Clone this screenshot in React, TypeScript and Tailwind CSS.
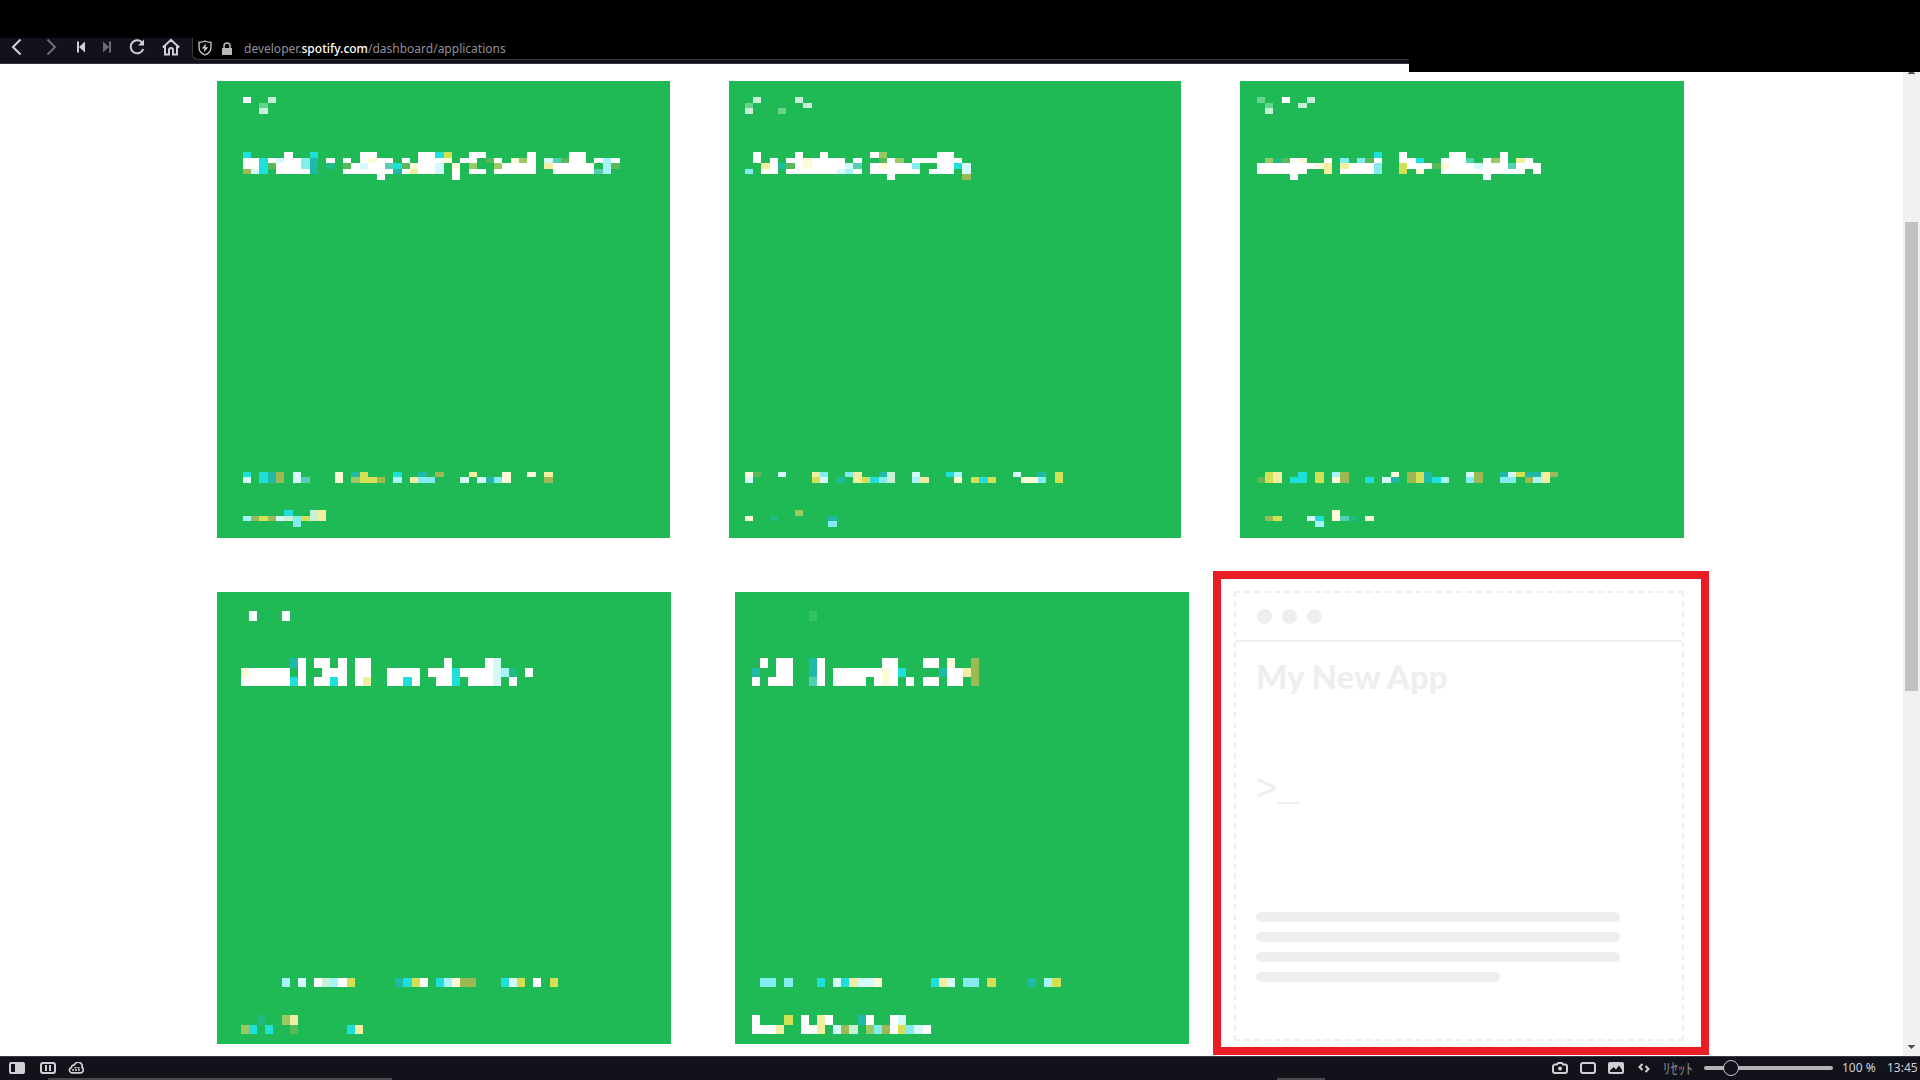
import React from "react";

const PALETTE: Record<string, string> = {
  w: "#ffffff",
  i: "#fbfbda",
  b: "#f1eea2",
  y: "#d3e053",
  o: "#9db954",
  l: "#98cc62",
  g: "#57b957",
  m: "#c6f1d6",
  s: "#68d38d",
  f: "#34c367",
  n: "#55cfb4",
  e: "#1fbc80",
  t: "#1fb9a6",
  c: "#1fdfda",
  k: "#82ecee",
  q: "#a5f4fa",
  p: "#d3f9f8",
};

type Band = { ys: number[]; rows: string[] };

type MosaicProps = {
  inset: number;
  pitch: number;
  height: number;
  bands: Band[];
  snap: (value: number) => number;
};

function Mosaic({ inset, pitch, height, bands, snap }: MosaicProps) {
  return (
    <svg width="440" height={height} shapeRendering="crispEdges" className="block shrink-0" aria-hidden="true">
      {bands.map((band, b) =>
        band.rows.map((row, r) =>
          row.split("").map((ch, c) => {
            if (!PALETTE[ch]) return null;
            const x = inset + snap(c * pitch);
            const next = inset + snap((c + 1) * pitch);
            return (
              <rect
                key={`${b}-${r}-${c}`}
                x={x}
                y={band.ys[r]}
                width={next - x}
                height={band.ys[r + 1] - band.ys[r]}
                fill={PALETTE[ch]}
              />
            );
          })
        )
      )}
    </svg>
  );
}

type CardData = { inset: number; badge: string[]; title: string[]; text: string[]; foot: string[] };

const UPPER: CardData[] = [
  {
    inset: 26,
    badge: ["w..m", "..s.", "..m."],
    title: [
      "c....w..c.....ww.....wwcy..ww.....w....ww....",
      "wwcwpwwkt.w.w.wiww.w.wwwi.ww.gw.ilw.pngww.wqw",
      "wwcgwwwkt.e.gwpwwncgiwwp.i.l..lwwww.bwwwww.qg",
      "opc.wwwwt...wwwwwwtwbwwp.w.ww.wwwww..wwwwwnq.",
      "................w........w",
    ],
    text: ["c.cto.p....i.ty...c..t.o...b...i..i.b", "p.cto.pn...i.lyyo.q.bkk...p.ptki....o"],
    foot: [".....c..mb", "qoyopmkymb", "......k..."],
  },
  {
    inset: 16,
    badge: [".m....m.", "s......m", "m...s..."],
    title: [
      ".w....w..w.....wl......ww..",
      ".w.w.wwiwwww.w..gwl.wwwwww.",
      "..bwtgwiwwwwpn.wiwwwk..wwcp",
      "k.ww.wwwwwwpqw.wwwwww.www.p",
      ".................w........o",
    ],
    text: ["ig..p...bk..kb..tm..p...cq......p..t.y", "p.......yp.t.byckm..qb...i.ycy...iik.y"],
    foot: ["......l....", "i..e......t", "..........k"],
  },
  {
    inset: 17,
    badge: ["s..w..m", ".s...m.", ".m....."],
    title: [
      "..............c..w.....ww....w....",
      ".legwi..w.k.kgw..wwc..wwwn.wlw.bw.",
      "wwwwwwwib.bwwwk..ywwwgiwwwpwwwnwww",
      "wwwwww..b.wwwwk..y.i..wwwwwwwwww.w",
      "....w......................w",
    ],
    text: [".yb..c.y.qo.....i.oyt....po..tpyttbo", "gyb.cc.y.io..c.pt.oytcq..ko..kk.oqb."],
    foot: [".........i....", ".oy...pc.ine.i", ".......q"],
  },
];

const LOWER: CardData[] = [
  {
    inset: 24,
    badge: [".w...w"],
    title: [
      "......tw.ww.w.ww.........w....wp....",
      "iwwwww.w..www.ww..wwww.wwwcwwwwpqe.w",
      "wwwwwwcw.wwcw.wb..wwcw..wwc.wwwp.w..",
    ],
    text: [".....q.p.wmqwy.....tcyw.cqioo...cpy.w.y"],
    foot: ["..e..lb........", "lc.c..g......cb"],
  },
  {
    inset: 17,
    badge: [".......f"],
    title: [
      ".w.ww..tw.......ww...ww.i..o",
      "t..ww..tw.wwwwwwiwc....twwbo",
      "w.www..nw.wwww.wiw.w.ww.ww.o",
    ],
    text: [".kk.k...c.pcbppi......cbp.kk.y....t.qy"],
    foot: ["w...y.w.bw...tw..wp...", "wwwb..wwb.pom.lkowykpw"],
  },
];

function UpperCard({ card }: { card: CardData }) {
  return (
    <article className="flex h-[457px] min-w-0 flex-col justify-between overflow-hidden bg-[#1fba55]">
      <Mosaic
        inset={card.inset}
        pitch={8.38}
        snap={Math.floor}
        height={100}
        bands={[
          { ys: [16, 22, 27, 33], rows: card.badge },
          { ys: [71, 77, 82, 88, 93, 99], rows: card.title },
        ]}
      />
      <Mosaic
        inset={card.inset}
        pitch={8.38}
        snap={Math.floor}
        height={66}
        bands={[
          { ys: [0, 5, 11], rows: card.text },
          { ys: [38, 44, 49, 55], rows: card.foot },
        ]}
      />
    </article>
  );
}

function LowerCard({ card }: { card: CardData }) {
  return (
    <article className="flex h-[452px] min-w-0 flex-1 flex-col justify-between overflow-hidden bg-[#1fba55]">
      <Mosaic
        inset={card.inset}
        pitch={8.12}
        snap={Math.round}
        height={100}
        bands={[
          { ys: [19, 29], rows: card.badge },
          { ys: [66, 76, 85, 94], rows: card.title },
        ]}
      />
      <Mosaic
        inset={card.inset}
        pitch={8.12}
        snap={Math.round}
        height={66}
        bands={[
          { ys: [0, 9], rows: card.text },
          { ys: [37, 47, 56], rows: card.foot },
        ]}
      />
    </article>
  );
}

function NewAppCard() {
  return (
    <section className="h-[484px] min-w-0 border-8 border-[#ec1c24] pt-3 pr-[17px] pl-[13px]">
      <button
        type="button"
        aria-label="Create My New App"
        className="relative flex h-[450px] w-full flex-col items-stretch justify-start text-left text-[#eeeeee]"
      >
        <svg className="absolute inset-0 size-full" aria-hidden="true">
          <g stroke="#eeeeee" strokeWidth="2" strokeDasharray="6 4.09">
            <line x1="0" y1="1" x2="100%" y2="1" />
            <line x1="0" y1="449" x2="100%" y2="449" />
            <line x1="1" y1="0" x2="1" y2="100%" />
            <line x1="100%" y1="0" x2="100%" y2="100%" transform="translate(-1 0)" />
          </g>
        </svg>
        <span className="mx-0.5 flex h-[51px] shrink-0 gap-2.5 border-b-2 border-[#eeeeee] pt-[18px] pl-[21px]">
          <span className="size-[15px] rounded-full bg-[#eeeeee]" />
          <span className="size-[15px] rounded-full bg-[#eeeeee]" />
          <span className="size-[15px] rounded-full bg-[#eeeeee]" />
        </span>
        <span className="block pt-3.5 pl-[22px] font-['Lato'] text-[33px] leading-10 font-black">My New App</span>
        <span className="block pt-[75px] pl-[22px] font-['Liberation_Mono'] text-[36px] leading-10">&gt;_</span>
        <span className="flex flex-col gap-2.5 pt-[101px] pl-[22px]">
          <span className="h-2.5 w-[85%] rounded-full bg-[#eeeeee]" />
          <span className="h-2.5 w-[85%] rounded-full bg-[#eeeeee]" />
          <span className="h-2.5 w-[85%] rounded-full bg-[#eeeeee]" />
          <span className="h-2.5 w-[57%] rounded-full bg-[#eeeeee]" />
        </span>
      </button>
    </section>
  );
}

function Tool({ label, children, dim }: { label: string; children: React.ReactNode; dim?: boolean }) {
  return (
    <button type="button" aria-label={label} className={dim ? "text-[#6c6c72]" : "text-[#d0d0d4]"}>
      {children}
    </button>
  );
}

function TopBar() {
  return (
    <header className="relative z-10 h-16 shrink-0 bg-black pt-[38px]">
      <div className="flex h-[26px] border-b border-[#33333d] bg-[#12121c]">
        <nav className="flex h-[18px] shrink-0 items-center pl-2" aria-label="Navigation">
          <Tool label="Back">
            <svg width="18" height="18" viewBox="0 0 18 18" fill="none" stroke="currentColor" strokeWidth="2" className="block"><path d="M12.5 1.5 5 9l7.500 7.500" /></svg>
          </Tool>
          <span className="w-4" />
          <Tool label="Forward" dim>
            <svg width="18" height="18" viewBox="0 0 18 18" fill="none" stroke="currentColor" strokeWidth="2" className="block"><path d="M5.500 1.500 13 9l-7.500 7.500" /></svg>
          </Tool>
          <span className="w-3" />
          <Tool label="Rewind">
            <svg width="18" height="18" viewBox="0 0 18 18" fill="currentColor" className="block"><path d="M5 3.500h2v11H5zM13 3.500v11L7 9z" /></svg>
          </Tool>
          <span className="w-2" />
          <Tool label="Fast forward" dim>
            <svg width="18" height="18" viewBox="0 0 18 18" fill="currentColor" className="block"><path d="M11 3.500h2v11h-2zM5 3.500v11L11 9z" /></svg>
          </Tool>
          <span className="w-3" />
          <Tool label="Reload">
            <svg width="18" height="18" viewBox="0 0 18 18" fill="none" stroke="currentColor" strokeWidth="2" className="block"><path d="M14.800 5.500A6.500 6.500 0 1 0 15.300 11" /><path d="M16 1.500v6h-6z" fill="currentColor" stroke="none" /></svg>
          </Tool>
          <span className="w-4" />
          <Tool label="Home">
            <svg width="18" height="18" viewBox="0 0 18 18" fill="none" stroke="currentColor" strokeWidth="2" className="block"><path d="M.800 9.500 9 1.800l8.200 7.700M3 8v8.500h4V12a2 2 0 0 1 4 0v4.500h4V8" /></svg>
          </Tool>
        </nav>
        <div className="ml-3 flex h-[22px] flex-1 items-center rounded-bl-md border-b border-l border-[#3a3a42] bg-black pl-[5px]">
          <Tool label="Site protection">
            <svg width="14" height="16" viewBox="0 0 14 16" fill="none" stroke="currentColor" strokeWidth="1.300" className="block -translate-y-px"><path d="M7 1c2 1 4 1.300 6 1.300v5C13 11 10.500 13.700 7 15 3.500 13.700 1 11 1 7.300v-5C3 2.300 5 2 7 1z" /><path d="M8 3.500 3.800 8.500h2.700L6 12.300l4.200-5.100H7.500z" fill="currentColor" stroke="none" /></svg>
          </Tool>
          <span className="w-2" />
          <svg width="14" height="14" viewBox="0 0 14 14" fill="none" stroke="#b9b9bd" strokeWidth="1.500" aria-hidden="true"><path d="M4 7V4a3 3 0 0 1 6 0v3" /><path d="M2 6h10v7H2z" fill="#b9b9bd" stroke="none" /></svg>
          <a href="#applications" className="ml-2.5 font-['Noto_Sans',sans-serif] text-xs leading-4 text-[#909095]">
            developer.<span className="font-medium text-white">spotify.com</span>/dashboard/applications
          </a>
        </div>
      </div>
      <div className="absolute top-0 right-0 h-[72px] w-[511px] bg-black" />
    </header>
  );
}

function ScrollBar() {
  return (
    <div className="flex w-[17px] shrink-0 flex-col items-center bg-[#f1f1f1]" aria-hidden="true">
      <svg width="9" height="15" viewBox="0 0 9 15" fill="#505050" className="block shrink-0"><path d="M4.500 6 8.500 10h-8z" /></svg>
      <div className="mt-[143px] h-[469px] w-[13px] bg-[#c1c1c1]" />
      <div className="flex-1" />
      <svg width="9" height="17" viewBox="0 0 9 17" fill="#505050" className="block shrink-0"><path d="M.500 6h8l-4 4z" /></svg>
    </div>
  );
}

function StatusBar() {
  return (
    <footer className="relative flex h-6 shrink-0 items-start border-t border-[#3a3a42] bg-[#12121a] font-['Noto_Sans','Noto_Sans_CJK_JP',sans-serif] text-xs text-[#d0d0d4]">
      <div className="flex h-[21px] flex-1 items-center pl-[9px]">
        <Tool label="Toggle panel">
          <svg width="16" height="12" viewBox="0 0 16 12" className="block"><path fill="currentColor" fillRule="evenodd" d="M2 0h12a2 2 0 0 1 2 2v8a2 2 0 0 1-2 2H2a2 2 0 0 1-2-2V2a2 2 0 0 1 2-2zm0 2v8h4V2z" /></svg>
        </Tool>
        <span className="w-[15px]" />
        <Tool label="Break mode">
          <svg width="16" height="12" viewBox="0 0 16 12" fill="none" stroke="currentColor" strokeWidth="2" className="block"><rect x="1" y="1" width="14" height="10" rx="2" /><path d="M6 3v6M10 3v6" /></svg>
        </Tool>
        <span className="w-3" />
        <Tool label="Sync">
          <svg width="16" height="12" viewBox="0 0 16 12" fill="none" stroke="currentColor" strokeWidth="1.700" className="block"><path d="M3.500 10.800h9a2.800 2.800 0 0 0 1.500-5.200A4 4 0 0 0 6.500 2.800 3 3 0 0 0 3.300 5.600a2.700 2.700 0 0 0 .2 5.200z" /><path d="M4 8h8M6.500 5.800h5" strokeDasharray="2 1" strokeWidth="1.500" /></svg>
        </Tool>
      </div>
      <div className="flex h-[21px] shrink-0 items-center pr-[5px]">
        <div className="flex items-center gap-3">
          <Tool label="Capture page">
            <svg width="16" height="12" viewBox="0 0 16 12" fill="none" stroke="currentColor" strokeWidth="2" className="block"><path d="M3 2.500h2L6 1h4l1 1.500h2a2 2 0 0 1 2 2V9a2 2 0 0 1-2 2H3a2 2 0 0 1-2-2V4.500a2 2 0 0 1 2-2z" /><circle cx="8" cy="6.500" r="2" fill="currentColor" stroke="none" /></svg>
          </Tool>
          <Tool label="Tile pages">
            <svg width="16" height="12" viewBox="0 0 16 12" fill="none" stroke="currentColor" strokeWidth="2" className="block"><rect x="1" y="1" width="14" height="10" rx="2" /></svg>
          </Tool>
          <Tool label="Toggle images">
            <svg width="16" height="12" viewBox="0 0 16 12" className="block"><rect width="16" height="12" rx="2" fill="currentColor" /><path d="M2 10V8.500L5.500 5 8 7.500 11 3.500l3 4.500v2z" fill="#12121a" /></svg>
          </Tool>
          <Tool label="Page actions">
            <svg width="16" height="12" viewBox="0 0 16 12" fill="none" stroke="currentColor" strokeWidth="2" className="block"><path d="M6.500 2 3.500 5l3 3M9.500 4l3 3-3 3" /></svg>
          </Tool>
        </div>
        <button type="button" className="ml-2.5 w-8 text-[15px] leading-4 whitespace-nowrap text-[#85858b]">ﾘｾｯﾄ</button>
        <input
          type="range"
          aria-label="Page zoom"
          min={20}
          max={500}
          defaultValue={100}
          className="ml-2.5 h-4 w-[129px] appearance-none bg-transparent [&::-webkit-slider-runnable-track]:h-1 [&::-webkit-slider-runnable-track]:rounded-full [&::-webkit-slider-runnable-track]:bg-[#b4b4b8] [&::-webkit-slider-thumb]:-mt-1.5 [&::-webkit-slider-thumb]:size-4 [&::-webkit-slider-thumb]:appearance-none [&::-webkit-slider-thumb]:rounded-full [&::-webkit-slider-thumb]:border [&::-webkit-slider-thumb]:border-[#c8c8cc] [&::-webkit-slider-thumb]:bg-[#12121a]"
        />
        <span className="ml-[9px] w-[45px] leading-4 whitespace-nowrap">100 %</span>
        <span className="w-7 leading-4 whitespace-nowrap">13:45</span>
      </div>
      <div className="absolute bottom-0 left-12 h-0.5 w-[344px] bg-[#4c494e]" />
      <div className="absolute bottom-0 left-[1277px] h-0.5 w-12 bg-[#4c494e]" />
    </footer>
  );
}

export default function App() {
  return (
    <div className="flex h-screen flex-col overflow-hidden bg-white">
      <TopBar />
      <div className="flex min-h-0 flex-1">
        <main className="min-w-0 flex-1 overflow-hidden pt-[17px]">
          <div className="grid grid-cols-[453fr_452fr_444fr] gap-[59px] pr-[219px] pl-[217px]">
            {UPPER.map((card, i) => (
              <UpperCard key={i} card={card} />
            ))}
          </div>
          <div className="mt-[33px] grid grid-cols-[972fr_496fr] gap-6 pr-[194px] pl-[217px]">
            <div className="flex min-w-0 gap-16 pt-[21px]">
              {LOWER.map((card, i) => (
                <LowerCard key={i} card={card} />
              ))}
            </div>
            <NewAppCard />
          </div>
        </main>
        <ScrollBar />
      </div>
      <StatusBar />
    </div>
  );
}
